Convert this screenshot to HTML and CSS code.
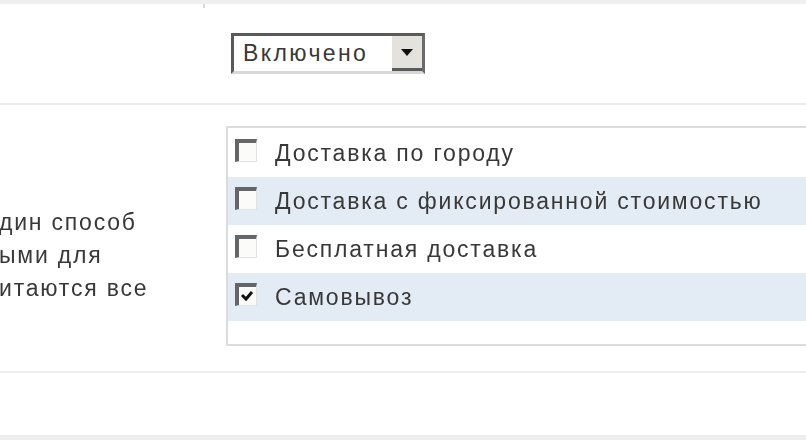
FILE: index.html
```html
<!DOCTYPE html>
<html lang="ru">
<head>
    <meta charset="UTF-8">
    <meta name="viewport" content="width=device-width, initial-scale=1.0">
    <title>Доставка</title>
    <link rel="stylesheet" href="styles.css">
</head>
<body>
    <div class="form">
        <div class="row row-status">
            <div class="label"></div>
            <div class="value">
                <div class="select">
                    <span class="select-text">Включено</span>
                    <span class="select-btn">
                        <svg width="14" height="10" viewBox="0 0 14 10"><polygon points="1,2 13,2 7,9" fill="#111"/></svg>
                    </span>
                </div>
            </div>
        </div>
        <div class="row row-delivery">
            <div class="label">
                <p>дин способ<br>ыми для<br>итаются все</p>
            </div>
            <div class="value">
                <ul class="checklist">
                    <li><span class="check"></span>Доставка по городу</li>
                    <li class="alt"><span class="check"></span>Доставка с фиксированной стоимостью</li>
                    <li><span class="check"></span>Бесплатная доставка</li>
                    <li class="alt"><span class="check checked"><svg width="14" height="12" viewBox="0 0 14 12"><polyline points="2,5 6,9 12,2" fill="none" stroke="#111" stroke-width="3"/></svg></span>Самовывоз</li>
                </ul>
            </div>
        </div>
        <div class="row row-empty">
            <div class="label"></div>
            <div class="value"></div>
        </div>
    </div>
    <div class="bottom-bar"></div>
</body>
</html>
```

FILE: styles.css
```css
*{
    margin: 0;
    padding: 0;
}
body{
    background-color: #fff;
    font-family: "Liberation Sans", Arial, sans-serif;
    font-size: 23px;
    letter-spacing: 1.8px;
    color: #383838;
    overflow: hidden;
}
.form{
    border-top: 4px solid #f0f0f0;
    filter: blur(0.5px);
}
.row{
    display: flex;
    border-bottom: 2px solid #ececec;
}
.label{
    width: 203px;
    flex-shrink: 0;
    overflow: hidden;
}
.value{
    flex: 1;
    padding-left: 28px;
}
.row-status{
    height: 99px;
}
.row-status .label{
    border-right: 2px solid transparent;
    border-image: linear-gradient(#d8d8d8 0, #d8d8d8 5px, transparent 5px) 1;
}
.row-status .value{
    display: flex;
    align-items: center;
    padding-left: 26px;
}
.select{
    display: flex;
    width: 188px;
    height: 35px;
    border-top: 3px solid #5a5a5a;
    border-left: 3px solid #5a5a5a;
    border-right: 3px solid #6a6a6a;
    border-bottom: 3px solid #d8d8d8;
    background-color: #fff;
}
.select-text{
    flex: 1;
    padding-left: 9px;
    line-height: 35px;
    letter-spacing: 2.4px;
}
.select-btn{
    width: 30px;
    display: flex;
    align-items: center;
    justify-content: center;
    background-color: #e4e2dc;
    border-bottom: 3px solid #5a5a5a;
    box-sizing: border-box;
}
.row-delivery{
    height: 266px;
}
.row-delivery .label p{
    padding-top: 101px;
    line-height: 33px;
    margin-left: -1px;
    white-space: nowrap;
}
.row-delivery .value{
    padding-left: 23px;
    padding-top: 21px;
}
.checklist{
    list-style: none;
    height: 215px;
    border: 2px solid #dcdcdc;
    border-right: none;
    padding-top: 1px;
}
.checklist li{
    display: flex;
    align-items: center;
    height: 48px;
    padding-left: 7px;
    white-space: nowrap;
}
.checklist .alt{
    background-color: #e3ecf5;
}
.check{
    display: flex;
    align-items: center;
    justify-content: center;
    width: 17px;
    height: 18px;
    margin-right: 18px;
    margin-top: -6px;
    border-top: 4px solid #666;
    border-left: 4px solid #666;
    border-right: 1px solid #e2e2e2;
    border-bottom: 1px solid #e2e2e2;
    background-color: #fbfbf8;
}
.check.checked svg{
    margin-left: -2px;
}
.row-empty{
    height: 62px;
    border-bottom: none;
}
.bottom-bar{
    height: 6px;
    background-color: #eeeeee;
}
```
